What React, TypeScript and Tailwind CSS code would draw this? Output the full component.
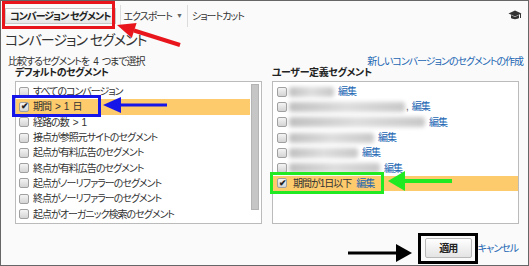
import React from 'react';

const font = "font-['Liberation_Sans','Noto_Sans_CJK_JP',sans-serif] [font-feature-settings:'palt']";

const Check = ({ checked }: { checked?: boolean }) => (
  <span className="relative flex items-center justify-center w-[10px] h-[10px] shrink-0 border border-[#a0a0a0] rounded-[2px] bg-gradient-to-b from-[#f4f4f4] to-[#d4d4d4]">
    {checked && <span className="text-[9px] leading-none text-[#222] font-bold">✔</span>}
  </span>
);

const defaults = [
  'すべてのコンバージョン',
  '期間\u2002>\u20021\u2002日',
  '経路の数\u2002>\u20021',
  '接点が参照元サイトのセグメント',
  '起点が有料広告のセグメント',
  '終点が有料広告のセグメント',
  '起点がノーリファラーのセグメント',
  '終点がノーリファラーのセグメント',
  '起点がオーガニック検索のセグメント',
];

// blurred (hidden) custom segment names
const custom = [
  { w: 45, comma: false },
  { w: 116, comma: true },
  { w: 136, comma: false },
  { w: 85, comma: false },
  { w: 69, comma: false },
  { w: 91, comma: false },
];

const App: React.FC = () => {
  return (
    <div className={`relative w-[529px] h-[266px] border border-[#666] bg-[#fafafa] overflow-hidden text-[#333] ${font}`}>
      {/* toolbar */}
      <div className="flex items-center h-[30px] pl-[4px] text-[10px] tracking-[-1px]">
        <div className="flex items-center h-[16px] pl-[4px] pr-[4px] border border-[#c8c8c8] bg-gradient-to-b from-white to-[#e6e6e6] font-bold text-[#222]">
          コンバージョン セグメント
        </div>
        <div className="w-px h-[22px] bg-[#dcdcdc] ml-[4px] mr-[3px]" />
        <span>エクスポート</span>
        <span className="text-[7px] ml-[4px] text-[#666]">▼</span>
        <div className="w-px h-[22px] bg-[#dcdcdc] ml-[5px] mr-[4px]" />
        <span>ショートカット</span>
        <svg className="ml-auto mr-[6px] mb-[2px]" width="14" height="10" viewBox="0 0 14 10">
          <path d="M0.5 3.5 L7 0.5 L13.5 3.5 L7 6.5 Z" fill="#333" />
          <path d="M3 5 V8 C4.5 9.5 9.5 9.5 11 8 V5 L7 7 Z" fill="#333" />
          <path d="M12.5 4 V8" stroke="#333" strokeWidth="1" />
        </svg>
      </div>

      {/* title */}
      <div className="pl-[4px] text-[14px] tracking-[-1px] leading-[17px] mt-[1px]">コンバージョン セグメント</div>

      <div className="flex mt-[7px] text-[10px] tracking-[-1px]">
        {/* default segments */}
        <div className="w-[271px] pl-[7px]">
          <div className="leading-[11px]">比較するセグメントを{'\u2002'}4{'\u2002'}つまで選択</div>
          <div className="pl-[7px] leading-[11px] font-bold tracking-[-0.6px] text-[#222] mb-[3px]">デフォルトのセグメント</div>
          <div className="ml-[7px] w-[247px] h-[143px] border border-[#bbb] bg-white flex">
            <div className="flex-1 pt-[2px]">
              {defaults.map((d, i) => (
                <div
                  key={d}
                  className={`h-[15.3px] flex items-center gap-[4px] pl-[3px] ${i === 1 ? 'bg-[#fdca6c]' : ''}`}
                >
                  <Check checked={i === 1} />
                  <span className="whitespace-nowrap">{d}</span>
                </div>
              ))}
            </div>
            <div className="w-[11px] pt-[2px] pl-[1px]">
              <div className="w-[8px] h-[126px] bg-[#c6c6c6] border border-[#b4b4b4]" />
            </div>
          </div>
        </div>

        {/* custom segments */}
        <div className="w-[249px]">
          <div className="text-right leading-[11px] text-[#2266b3] -mr-[2px]">新しいコンバージョンのセグメントの作成</div>
          <div className="leading-[11px] font-bold tracking-[-0.4px] text-[#222] mb-[3px]">ユーザー定義セグメント</div>
          <div className="w-[247px] h-[143px] border border-[#bbb] bg-white pt-[2px]">
            {custom.map((c, i) => (
              <div key={i} className="h-[15.3px] flex items-center pl-[4px]">
                <Check />
                <span
                  className="ml-[2px] h-[10px] rounded-[3px] blur-[2px] bg-gradient-to-r from-[#c0c0c0] via-[#dedede] to-[#c8c8c8]"
                  style={{ width: c.w }}
                />
                {c.comma && <span className="ml-[1px] text-[#555]">,</span>}
                <span className="ml-[4px] text-[#2266b3]">編集</span>
              </div>
            ))}
            <div className="h-[15.3px] flex items-center pl-[4px] bg-[#fdca6c]">
              <Check checked />
              <span className="ml-[6px]">期間が1日以下</span>
              <span className="ml-[5px] text-[#2266b3]">編集</span>
            </div>
          </div>
        </div>
      </div>

      {/* footer */}
      <div className="flex items-center justify-end pr-[10px] mt-[14px] text-[10px] tracking-[-1px]">
        <div className="w-[47px] h-[20px] flex items-center justify-center border border-[#b8b8b8] rounded-[2px] bg-gradient-to-b from-white to-[#e4e4e4] font-bold text-[#222]">
          適用
        </div>
        <span className="ml-[6px] text-[#2266b3]">キャンセル</span>
      </div>

      {/* annotations */}
      <div className="absolute left-[1px] top-[0px] w-[113px] h-[28px] border-[3px] border-[#e8161c]" />
      <div className="absolute left-[11px] top-[94px] w-[89px] h-[22px] border-[3px] border-[#1616e8]" />
      <div className="absolute left-[269px] top-[171px] w-[114px] h-[22px] border-[3px] border-[#22ea22]" />
      <div className="absolute left-[417px] top-[232px] w-[60px] h-[31px] border-[3px] border-black" />
      <svg className="absolute left-0 top-0 pointer-events-none" width="529" height="266">
        <line x1="179" y1="44" x2="133" y2="29.5" stroke="#e8161c" strokeWidth="4" />
        <polygon points="116,24 135.6,21.9 130.8,37.1" fill="#e8161c" />
        <line x1="166" y1="104" x2="118" y2="104" stroke="#1616e8" strokeWidth="3" />
        <polygon points="102,104 120,96 120,112" fill="#1616e8" />
        <line x1="451" y1="180" x2="400" y2="180" stroke="#22ea22" strokeWidth="4" />
        <polygon points="387,180 404,170 404,190" fill="#22ea22" />
        <line x1="347" y1="252" x2="398" y2="252" stroke="#000" strokeWidth="3" />
        <polygon points="411,252 395,243 395,261" fill="#000" />
      </svg>
    </div>
  );
};

export default App;
